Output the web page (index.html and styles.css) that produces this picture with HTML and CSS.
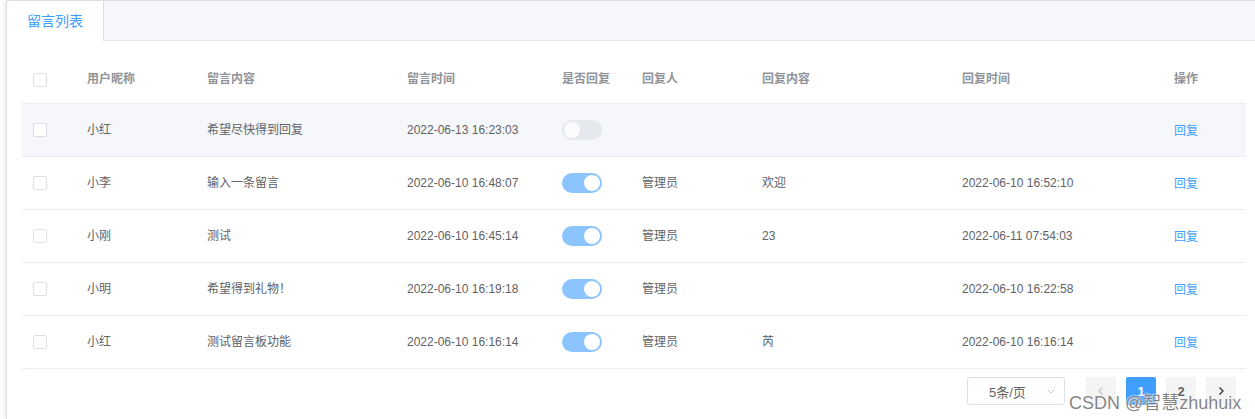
FILE: index.html
```html
<!DOCTYPE html>
<html lang="zh-CN">

<head>
    <meta charset="UTF-8">
    <meta name="viewport" content="width=device-width, initial-scale=1.0">
    <title>留言列表</title>
    <link rel="stylesheet" href="styles.css">
</head>

<body>
    <div class="card">
        <div class="tabs">
            <div class="tab active">留言列表</div>
        </div>

        <div class="content">
            <table class="list">
                <colgroup>
                    <col style="width:55px">
                    <col style="width:120px">
                    <col style="width:200px">
                    <col style="width:155px">
                    <col style="width:80px">
                    <col style="width:120px">
                    <col style="width:200px">
                    <col style="width:212px">
                    <col style="width:82px">
                </colgroup>
                <tr class="head">
                    <th class="sel"><span class="box"></span></th>
                    <th>用户昵称</th>
                    <th>留言内容</th>
                    <th>留言时间</th>
                    <th>是否回复</th>
                    <th>回复人</th>
                    <th>回复内容</th>
                    <th>回复时间</th>
                    <th>操作</th>
                </tr>
                <tr class="hover">
                    <td class="sel"><span class="box"></span></td>
                    <td>小红</td>
                    <td>希望尽快得到回复</td>
                    <td>2022-06-13 16:23:03</td>
                    <td><span class="switch"></span></td>
                    <td></td>
                    <td></td>
                    <td></td>
                    <td><span class="link">回复</span></td>
                </tr>
                <tr>
                    <td class="sel"><span class="box"></span></td>
                    <td>小李</td>
                    <td>输入一条留言</td>
                    <td>2022-06-10 16:48:07</td>
                    <td><span class="switch on"></span></td>
                    <td>管理员</td>
                    <td>欢迎</td>
                    <td>2022-06-10 16:52:10</td>
                    <td><span class="link">回复</span></td>
                </tr>
                <tr>
                    <td class="sel"><span class="box"></span></td>
                    <td>小刚</td>
                    <td>测试</td>
                    <td>2022-06-10 16:45:14</td>
                    <td><span class="switch on"></span></td>
                    <td>管理员</td>
                    <td>23</td>
                    <td>2022-06-11 07:54:03</td>
                    <td><span class="link">回复</span></td>
                </tr>
                <tr>
                    <td class="sel"><span class="box"></span></td>
                    <td>小明</td>
                    <td>希望得到礼物！</td>
                    <td>2022-06-10 16:19:18</td>
                    <td><span class="switch on"></span></td>
                    <td>管理员</td>
                    <td></td>
                    <td>2022-06-10 16:22:58</td>
                    <td><span class="link">回复</span></td>
                </tr>
                <tr>
                    <td class="sel"><span class="box"></span></td>
                    <td>小红</td>
                    <td>测试留言板功能</td>
                    <td>2022-06-10 16:16:14</td>
                    <td><span class="switch on"></span></td>
                    <td>管理员</td>
                    <td>芮</td>
                    <td>2022-06-10 16:16:14</td>
                    <td><span class="link">回复</span></td>
                </tr>
            </table>

            <div class="pager">
                <div class="size">
                    <span>5条/页</span>
                    <svg class="caret" width="10" height="10" viewBox="0 0 10 10">
                        <path d="M1.5 3.5 L5 7 L8.5 3.5" fill="none" stroke="#c0c4cc" stroke-width="1"/>
                    </svg>
                </div>
                <div class="pbtn off">
                    <svg width="10" height="10" viewBox="0 0 10 10">
                        <path d="M6.5 1.5 L3 5 L6.5 8.5" fill="none" stroke="#c0c4cc" stroke-width="1.3"/>
                    </svg>
                </div>
                <div class="pbtn cur">1</div>
                <div class="pbtn">2</div>
                <div class="pbtn">
                    <svg width="10" height="10" viewBox="0 0 10 10">
                        <path d="M3.5 1.5 L7 5 L3.5 8.5" fill="none" stroke="#303133" stroke-width="1.3"/>
                    </svg>
                </div>
            </div>
        </div>
    </div>

    <div class="mark">CSDN @智慧zhuhuix</div>
</body>

</html>
```

FILE: styles.css
```css
body {
    margin: 0;
    width: 1255px;
    height: 419px;
    overflow: hidden;
    background-color: #fff;
    font-family: "Liberation Sans", "Noto Sans CJK SC", sans-serif;
    color: #606266;
    position: relative;
}

.card {
    margin-left: 6px;
    width: 1256px;
    height: 419px;
    box-sizing: border-box;
    border: 1px solid #dcdfe6;
    border-bottom: none;
    background-color: #fff;
    box-shadow: 0 2px 4px 0 rgba(0, 0, 0, .12), 0 0 6px 0 rgba(0, 0, 0, .04);
}

.tabs {
    height: 39px;
    background-color: #f5f7fa;
    border-bottom: 1px solid #e4e7ed;
    display: flex;
}

.tab {
    height: 40px;
    line-height: 40px;
    padding: 0 20px;
    font-size: 14px;
    color: #909399;
}

.tab.active {
    color: #409eff;
    background-color: #fff;
    border-right: 1px solid #dcdfe6;
}

.content {
    padding: 15px;
}

/* table */
.list {
    width: 1224px;
    table-layout: fixed;
    border-collapse: collapse;
    font-size: 12px;
}

.list th,
.list td {
    padding: 12px 0 12px 10px;
    line-height: 23px;
    text-align: left;
    border-bottom: 1px solid #ebeef5;
    white-space: nowrap;
    vertical-align: middle;
}

.list td {
    height: 28px;
}

.list th {
    color: #909399;
    font-weight: bold;
}

.list .sel {
    padding-left: 11px;
}

.hover td {
    background-color: #f5f7fa;
}

.box {
    display: inline-block;
    width: 12px;
    height: 12px;
    border: 1px solid #dcdfe6;
    border-radius: 2px;
    background-color: #fff;
    vertical-align: middle;
}

.switch {
    display: inline-block;
    width: 40px;
    height: 20px;
    border-radius: 10px;
    background-color: #dcdfe6;
    opacity: .6;
    position: relative;
    vertical-align: middle;
}

.switch::after {
    content: "";
    position: absolute;
    top: 2px;
    left: 2px;
    width: 16px;
    height: 16px;
    border-radius: 50%;
    background-color: #fff;
}

.switch.on {
    background-color: #409eff;
}

.switch.on::after {
    left: 22px;
}

.link {
    color: #409eff;
    display: inline-block;
    padding-top: 2px;
}

/* pagination */
.pager {
    display: flex;
    justify-content: flex-end;
    align-items: center;
    margin-top: 8px;
    padding-right: 5px;
    font-size: 13px;
}

.size {
    width: 98px;
    height: 28px;
    box-sizing: border-box;
    border: 1px solid #dcdfe6;
    border-radius: 3px;
    display: flex;
    align-items: center;
    padding: 0 8px 0 21px;
    margin-right: 16px;
    color: #606266;
}

.size span {
    flex: 1;
}

.pbtn {
    width: 30px;
    height: 28px;
    margin: 0 5px;
    background-color: #f4f4f5;
    border-radius: 2px;
    display: flex;
    align-items: center;
    justify-content: center;
    font-weight: bold;
    color: #606266;
}

.pbtn.cur {
    background-color: #409eff;
    color: #fff;
}

.mark {
    position: absolute;
    left: 1069px;
    top: 388px;
    font-size: 18px;
    color: rgba(110, 110, 110, .85);
    text-shadow: 0 0 2px #fff, 0 0 2px #fff;
    white-space: nowrap;
}
```
